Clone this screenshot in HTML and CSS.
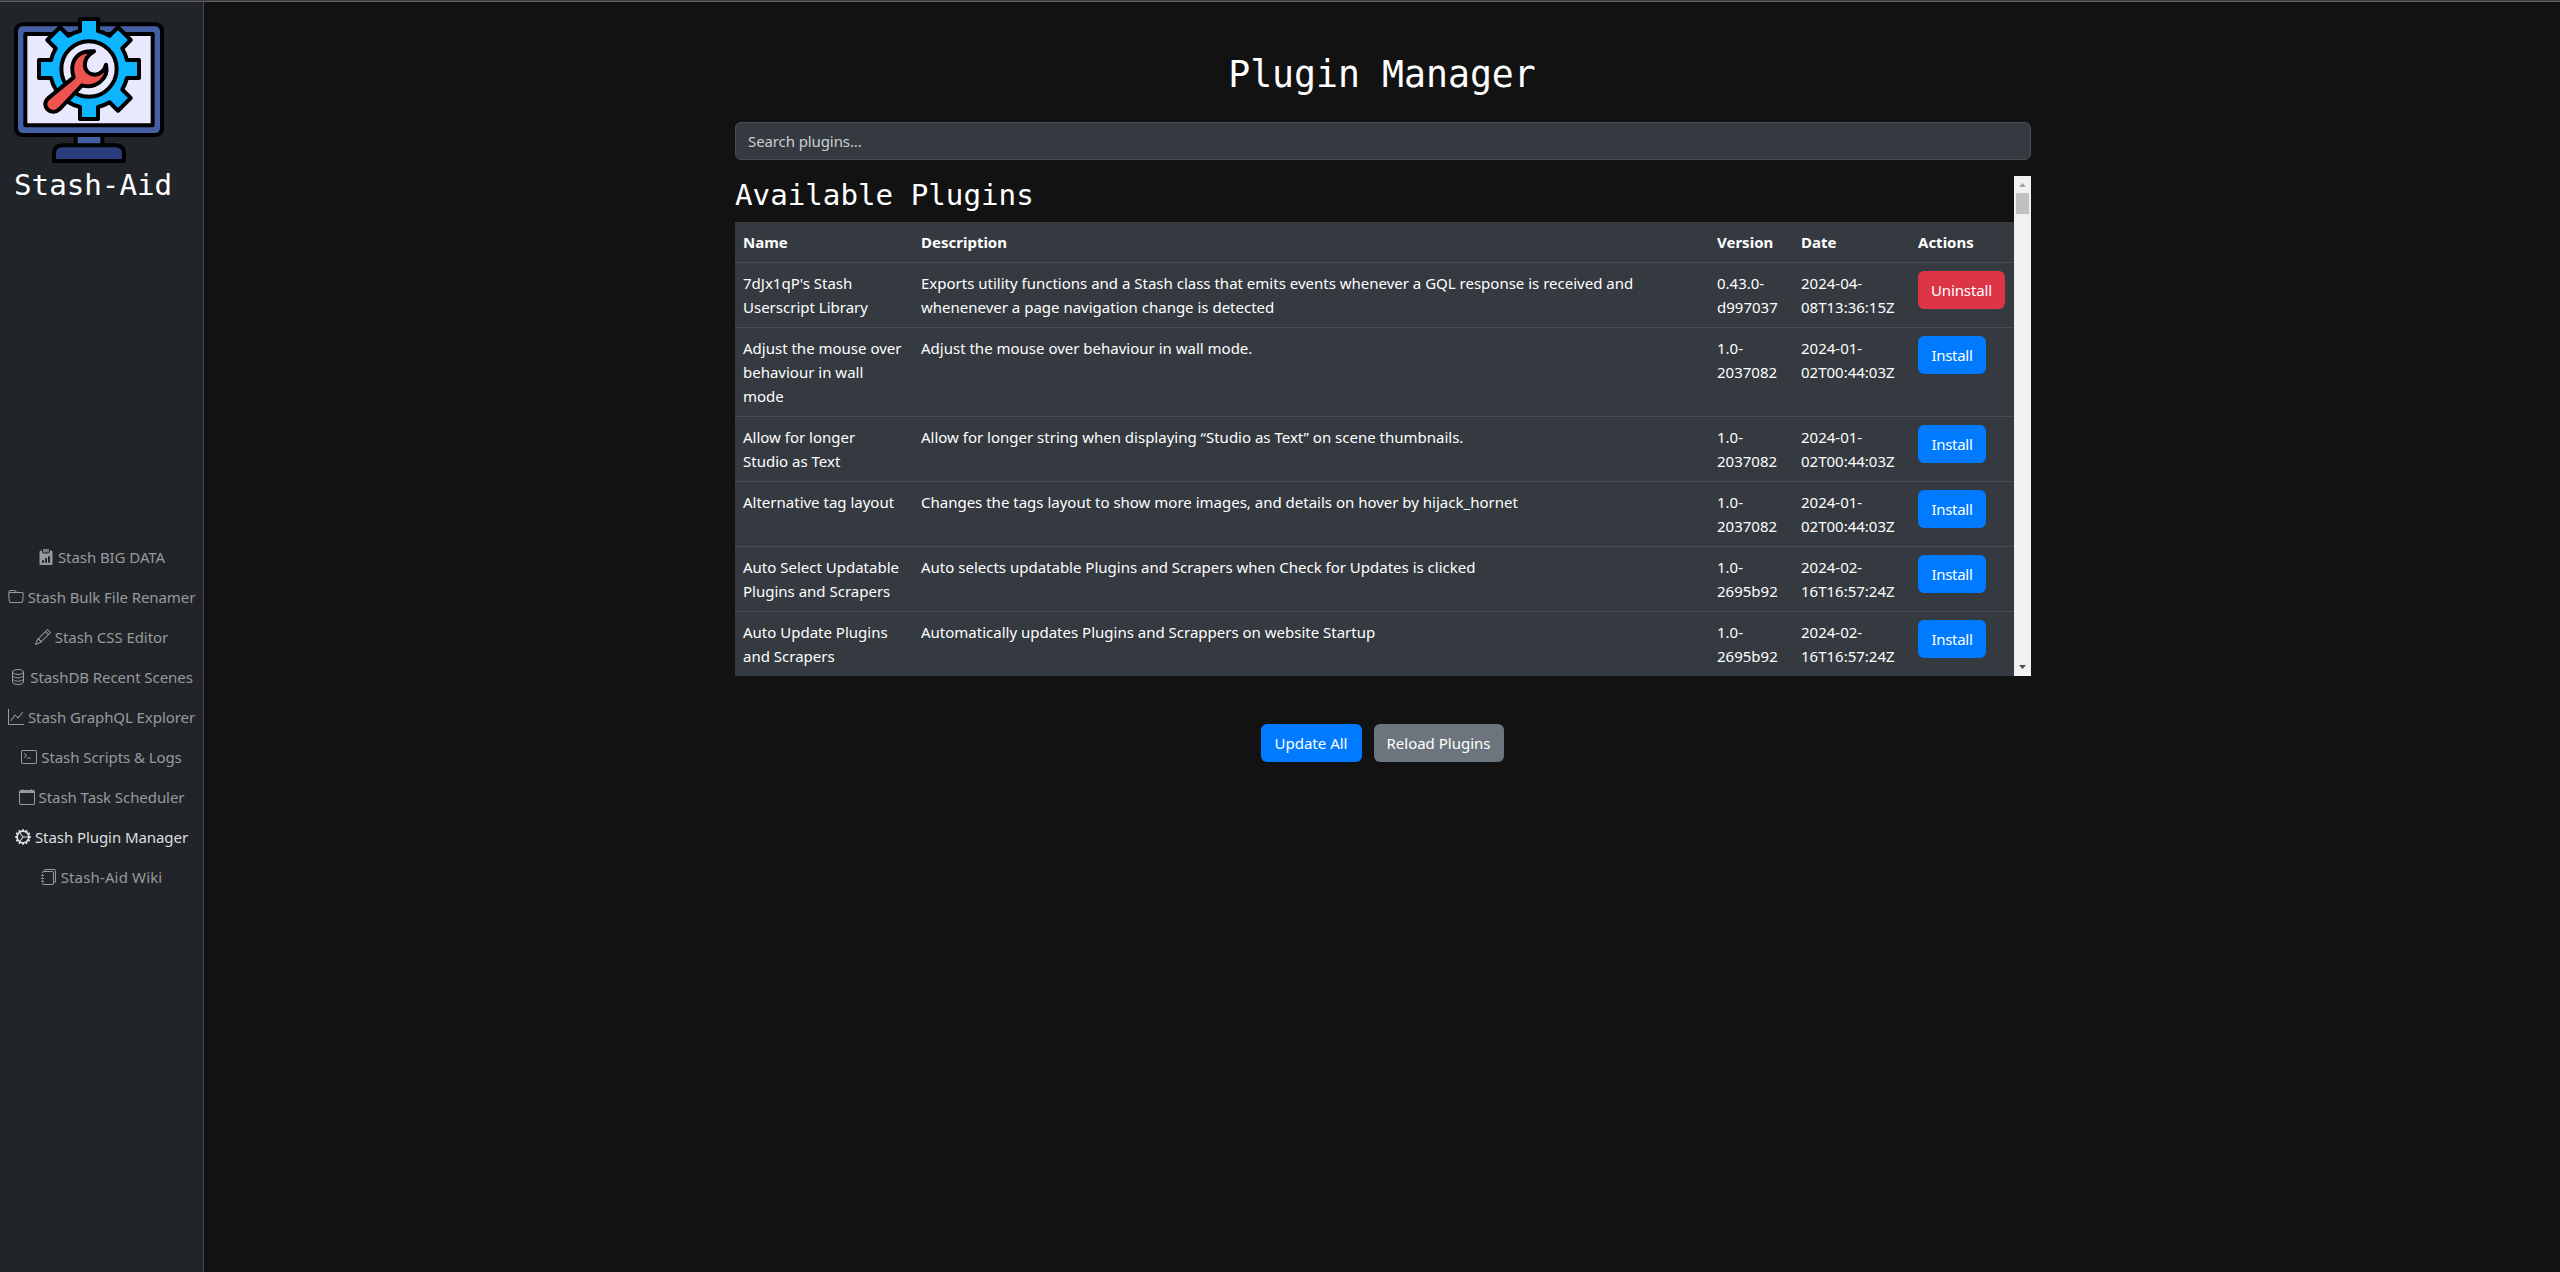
FILE: index.html
```
<!DOCTYPE html>
<html lang="en">
<head>
<meta charset="utf-8">
<title>Stash-Aid</title>
<link rel="stylesheet" href="styles.css">
</head>
<body>
<div class="layout">
  <aside class="sidebar">
    <div class="brand">
      <svg class="logo" viewBox="42 42 450 450" stroke="#000" stroke-width="12" stroke-linejoin="round">
        <rect x="227" y="400" width="80" height="40" fill="#455fa5"/>
        <path d="M162 483V461Q162 436 188 436H346Q372 436 372 461V483Z" fill="#293d7d"/>
        <rect x="48" y="73" width="438" height="332" rx="20" fill="#455fa5"/>
        <rect x="76" y="102" width="382" height="274" fill="#e8e8ff"/>
        <g transform="translate(267 207)">
          <path fill="#0db4ff" d="M-27-114V-150H27V-114A117 117 0 0 1 61.5-99.7L87-125.2 125.2-87 99.7-61.5A117 117 0 0 1 114-27H150V27H114A117 117 0 0 1 99.7 61.5L125.2 87 87 125.2 61.5 99.7A117 117 0 0 1 27 114V150H-27V114A117 117 0 0 1-61.5 99.7 117 117 0 0 1-99.7 61.5 117 117 0 0 1-114 27H-150V-27H-114A117 117 0 0 1-99.7-61.5L-125.2-87-87-125.2-61.5-99.7A117 117 0 0 1-27-114Z"/>
          <circle r="83" fill="#e8e8ff"/>
        </g>
        <path fill="#ef5350" d="M144 295 221 232C209 195 222 149 282 154C242 178 248 222 284 224C302 222 314 210 318 194C328 236 286 268 246 256L178 328C154 350 120 318 144 295Z"/>
      </svg>
      <div class="brand-name">Stash-Aid</div>
    </div>
    <nav class="nav">
      <a class="nav-link"><svg class="icon" viewBox="0 0 16 16"><path d="M5 0h6v3.500H5z" opacity=".75"/><path d="M4 1.500H3a1.500 1.500 0 0 0-1.500 1.500V15A1 1 0 0 0 2.500 16h11a1 1 0 0 0 1-1V3a1.500 1.500 0 0 0-1.500-1.500h-1v1A2 2 0 0 1 10 4.500H6A2 2 0 0 1 4 2.500zM10 8a1 1 0 1 1 2 0v5a1 1 0 1 1-2 0zm-6 4a1 1 0 1 1 2 0v1a1 1 0 1 1-2 0zm4-3a1 1 0 0 1 1 1v3a1 1 0 1 1-2 0v-3a1 1 0 0 1 1-1"/></svg>Stash BIG DATA</a>
      <a class="nav-link"><svg class="icon" viewBox="0 0 16 16"><path d="M.54 3.87.5 3a2 2 0 0 1 2-2h3.672a2 2 0 0 1 1.414.586l.828.828A2 2 0 0 0 9.828 3h3.982a2 2 0 0 1 1.992 2.181l-.637 7A2 2 0 0 1 13.174 14H2.826a2 2 0 0 1-1.991-1.819l-.637-7a2 2 0 0 1 .342-1.31zM2.19 4a1 1 0 0 0-.996 1.09l.637 7a1 1 0 0 0 .995.91h10.348a1 1 0 0 0 .995-.91l.637-7A1 1 0 0 0 13.81 4zm4.69-1.707A1 1 0 0 0 6.172 2H2.5a1 1 0 0 0-1 .981l.006.139q.323-.119.684-.12h5.396z"/></svg>Stash Bulk File Renamer</a>
      <a class="nav-link"><svg class="icon" viewBox="0 0 16 16"><path d="M12.146.146a.5.5 0 0 1 .708 0l3 3a.5.5 0 0 1 0 .708l-10 10a.5.5 0 0 1-.168.11l-5 2a.5.5 0 0 1-.65-.65l2-5a.5.5 0 0 1 .11-.168zM11.207 2.5 13.5 4.793 14.793 3.5 12.5 1.207zm1.586 3L10.5 3.207 4 9.707V10h.5a.5.5 0 0 1 .5.5v.5h.5a.5.5 0 0 1 .5.5v.5h.293zm-9.761 5.175-.106.106-1.528 3.821 3.821-1.528.106-.106A.5.5 0 0 1 5 12.5V12h-.5a.5.5 0 0 1-.5-.5V11h-.5a.5.5 0 0 1-.468-.325"/></svg>Stash CSS Editor</a>
      <a class="nav-link"><svg class="icon" viewBox="0 0 16 16"><g fill="none" stroke="currentColor"><ellipse cx="8" cy="3" rx="5.500" ry="2.500"/><path d="M2.500 3v10c0 1.400 2.500 2.500 5.500 2.500s5.500-1.100 5.500-2.500V3M2.500 6.300c0 1.400 2.500 2.500 5.500 2.500s5.500-1.100 5.500-2.500M2.500 9.700c0 1.400 2.500 2.500 5.500 2.500s5.500-1.100 5.500-2.500"/></g></svg>StashDB Recent Scenes</a>
      <a class="nav-link"><svg class="icon" viewBox="0 0 16 16"><path d="M0 0h1v15h15v1H0zm14.817 3.113a.5.5 0 0 1 .07.704l-4.500 5.500a.5.5 0 0 1-.74.037L7.060 6.767l-3.656 5.027a.5.5 0 0 1-.808-.588l4-5.500a.5.5 0 0 1 .758-.06l2.609 2.610 4.150-5.073a.5.5 0 0 1 .704-.07"/></svg>Stash GraphQL Explorer</a>
      <a class="nav-link"><svg class="icon" viewBox="0 0 16 16"><path d="M6 9a.5.5 0 0 1 .5-.5h3a.5.5 0 0 1 0 1h-3A.5.5 0 0 1 6 9M3.854 4.146a.5.5 0 1 0-.708.708L4.793 6.500 3.146 8.146a.5.5 0 1 0 .708.708l2-2a.5.5 0 0 0 0-.708z"/><path d="M2 1a2 2 0 0 0-2 2v10a2 2 0 0 0 2 2h12a2 2 0 0 0 2-2V3a2 2 0 0 0-2-2zm12 1a1 1 0 0 1 1 1v10a1 1 0 0 1-1 1H2a1 1 0 0 1-1-1V3a1 1 0 0 1 1-1z"/></svg>Stash Scripts &amp; Logs</a>
      <a class="nav-link"><svg class="icon" viewBox="0 0 16 16"><path d="M3.500 0a.5.5 0 0 1 .5.5V1h8V.5a.5.5 0 0 1 1 0V1h1a2 2 0 0 1 2 2v11a2 2 0 0 1-2 2H2a2 2 0 0 1-2-2V3a2 2 0 0 1 2-2h1V.5a.5.5 0 0 1 .5-.5M1 4v10a1 1 0 0 0 1 1h12a1 1 0 0 0 1-1V4z"/></svg>Stash Task Scheduler</a>
      <a class="nav-link active"><svg class="icon" viewBox="0 0 16 16"><path d="M7.068.727c.243-.97 1.620-.97 1.864 0l.071.286a.96.96 0 0 0 1.622.434l.205-.211c.695-.719 1.888-.03 1.613.931l-.08.284a.96.96 0 0 0 1.187 1.187l.283-.081c.96-.275 1.650.918.931 1.613l-.211.205a.96.96 0 0 0 .434 1.622l.286.071c.97.243.97 1.620 0 1.864l-.286.071a.96.96 0 0 0-.434 1.622l.211.205c.719.695.03 1.888-.931 1.613l-.284-.08a.96.96 0 0 0-1.187 1.187l.081.283c.275.96-.918 1.650-1.613.931l-.205-.211a.96.96 0 0 0-1.622.434l-.071.286c-.243.97-1.620.97-1.864 0l-.071-.286a.96.96 0 0 0-1.622-.434l-.205.211c-.695.719-1.888.03-1.613-.931l.08-.284a.96.96 0 0 0-1.186-1.187l-.284.081c-.96.275-1.650-.918-.931-1.613l.211-.205a.96.96 0 0 0-.434-1.622l-.286-.071c-.97-.243-.97-1.620 0-1.864l.286-.071a.96.96 0 0 0 .434-1.622l-.211-.205c-.719-.695-.03-1.888.931-1.613l.284.08a.96.96 0 0 0 1.187-1.186l-.081-.284c-.275-.96.918-1.650 1.613-.931l.205.211a.96.96 0 0 0 1.622-.434zM12.973 8.500H8.250l-2.834 3.779A4.998 4.998 0 0 0 12.973 8.500m0-1a4.998 4.998 0 0 0-7.557-3.779l2.834 3.780zM4.617 4.322A4.980 4.980 0 0 0 3.002 8c0 1.455.622 2.765 1.615 3.678L7.375 8z"/></svg>Stash Plugin Manager</a>
      <a class="nav-link wiki"><svg class="icon" viewBox="0 0 16 16"><path d="M5 0h8a2 2 0 0 1 2 2v10a2 2 0 0 1-2 2 2 2 0 0 1-2 2H3a2 2 0 0 1-2-2h1a1 1 0 0 0 1 1h8a1 1 0 0 0 1-1V4a1 1 0 0 0-1-1H3a1 1 0 0 0-1 1H1a2 2 0 0 1 2-2h8a2 2 0 0 1 2 2v9a1 1 0 0 0 1-1V2a1 1 0 0 0-1-1H5a1 1 0 0 0-1 1H3a2 2 0 0 1 2-2"/><path d="M1 6v-.5a.5.5 0 0 1 1 0V6h.5a.5.5 0 0 1 0 1h-2a.5.5 0 0 1 0-1zm0 3v-.5a.5.5 0 0 1 1 0V9h.5a.5.5 0 0 1 0 1h-2a.5.5 0 0 1 0-1zm0 2.500v.5H.5a.5.5 0 0 0 0 1h2a.5.5 0 0 0 0-1H2v-.5a.5.5 0 0 0-1 0"/></svg>Stash-Aid Wiki</a>
    </nav>
  </aside>
  <main class="main">
    <div class="container">
      <h1 class="title">Plugin Manager</h1>
      <input class="search" type="text" placeholder="Search plugins...">
      <div class="list">
        <div class="list-body">
          <h2 class="subtitle">Available Plugins</h2>
          <table class="plugins">
            <colgroup><col class="c-name"><col class="c-desc"><col class="c-version"><col class="c-date"><col class="c-actions"></colgroup>
            <thead>
              <tr><th>Name</th><th>Description</th><th>Version</th><th>Date</th><th>Actions</th></tr>
            </thead>
            <tbody>
              <tr><td>7dJx1qP's Stash<br>Userscript Library</td><td>Exports utility functions and a Stash class that emits events whenever a GQL response is received and<br>whenenever a page navigation change is detected</td><td>0.43.0-<br>d997037</td><td>2024-04-<br>08T13:36:15Z</td><td><button class="btn danger uninstall">Uninstall</button></td></tr>
              <tr><td>Adjust the mouse over<br>behaviour in wall<br>mode</td><td>Adjust the mouse over behaviour in wall mode.</td><td>1.0-<br>2037082</td><td>2024-01-<br>02T00:44:03Z</td><td><button class="btn primary install">Install</button></td></tr>
              <tr><td>Allow for longer<br>Studio as Text</td><td>Allow for longer string when displaying “Studio as Text” on scene thumbnails.</td><td>1.0-<br>2037082</td><td>2024-01-<br>02T00:44:03Z</td><td><button class="btn primary install">Install</button></td></tr>
              <tr><td>Alternative tag layout</td><td>Changes the tags layout to show more images, and details on hover by hijack_hornet</td><td>1.0-<br>2037082</td><td>2024-01-<br>02T00:44:03Z</td><td><button class="btn primary install">Install</button></td></tr>
              <tr><td>Auto Select Updatable<br>Plugins and Scrapers</td><td>Auto selects updatable Plugins and Scrapers when Check for Updates is clicked</td><td>1.0-<br>2695b92</td><td>2024-02-<br>16T16:57:24Z</td><td><button class="btn primary install">Install</button></td></tr>
              <tr><td>Auto Update Plugins<br>and Scrapers</td><td>Automatically updates Plugins and Scrappers on website Startup</td><td>1.0-<br>2695b92</td><td>2024-02-<br>16T16:57:24Z</td><td><button class="btn primary install">Install</button></td></tr>
            </tbody>
          </table>
        </div>
        <div class="scrollbar">
          <svg class="arrow" viewBox="0 0 17 17"><path d="M5 11h7L8.500 7z" fill="#a3a3a3"/></svg>
          <div class="thumb"></div>
          <svg class="arrow down" viewBox="0 0 17 17"><path d="M5 6h7L8.500 10z" fill="#505050"/></svg>
        </div>
      </div>
      <div class="buttons">
        <button class="btn primary update">Update All</button>
        <button class="btn secondary reload">Reload Plugins</button>
      </div>
    </div>
  </main>
</div>
</body>
</html>
```
FILE: styles.css
```
* { box-sizing: border-box; }

body {
  margin: 0;
  background: #121212;
  color: #fff;
  font: 15px/24px "Noto Sans", sans-serif;
}

body::before {
  content: "";
  display: block;
  height: 1px;
  background: #3b3b3d;
}

.layout {
  display: flex;
  height: 1271px;
  border-top: 1px solid #626264;
}

.sidebar {
  width: 204px;
  margin-right: 2px;
  background: #212529;
  border-right: 1px solid #4b4b4c;
  display: flex;
  flex-direction: column;
}

.brand { height: 535px; padding: 12px 0 0 14px; }
.logo { display: block; width: 150px; height: 150px; }

.brand-name {
  margin-top: 2px;
  font: 29.2px/38px "DejaVu Sans Mono", monospace;
}

.nav { display: flex; flex-direction: column; }

.nav-link {
  display: flex;
  justify-content: center;
  align-items: center;
  gap: 4px;
  height: 40px;
  color: #989a9b;
  letter-spacing: -0.07px;
  white-space: nowrap;
}

.nav-link.active { color: #dedfdf; }
.nav-link.wiki { letter-spacing: 0.15px; }
.icon { width: 16px; height: 16px; fill: currentColor; flex: none; }

.main { flex: 1; }
.container { width: 1296px; margin: 0 auto; padding-top: 49px; }

.title {
  margin: 0 0 23px;
  padding-right: 2px;
  font: 36.5px/48px "DejaVu Sans Mono", monospace;
  text-align: center;
}

.search {
  display: block;
  width: 100%;
  height: 38px;
  padding: 6px 12px;
  background: #343a40;
  border: 1px solid #454d55;
  border-radius: 6px;
  font: inherit;
  letter-spacing: -0.1px;
  color: #fff;
}

.search::placeholder { color: #cbced0; opacity: 1; }

.list { display: flex; height: 500px; margin-top: 16px; }
.list-body { width: 1279px; overflow: hidden; }

.subtitle {
  margin: 0;
  height: 46px;
  font: 29.2px/38px "DejaVu Sans Mono", monospace;
}

.plugins {
  width: 1279px;
  table-layout: fixed;
  border-collapse: separate;
  border-spacing: 0;
  background: #343a40;
}

.c-name { width: 178px; }
.c-desc { width: 796px; }
.c-version { width: 84px; }
.c-date { width: 117px; }
.c-actions { width: 104px; }

.plugins th,
.plugins td {
  padding: 8px;
  border-bottom: 1px solid #454d55;
  text-align: left;
  vertical-align: top;
  white-space: nowrap;
}

.plugins th { font-weight: 700; }
.plugins td { height: 65px; }

.btn {
  display: block;
  height: 38px;
  padding: 0;
  border: 0;
  border-radius: 6px;
  font: inherit;
  color: #fff;
}

.primary { background: #007bff; }
.danger { background: #dc3545; }
.secondary { background: #6c757d; }
.uninstall { width: 87px; letter-spacing: -0.1px; }
.install { width: 68px; letter-spacing: -0.3px; }
.update { width: 101px; }
.reload { width: 130px; }

.scrollbar {
  width: 17px;
  display: flex;
  flex-direction: column;
  align-items: center;
  background: #f1f1f1;
}

.arrow { width: 17px; height: 17px; }
.arrow.down { margin-top: auto; }
.thumb { width: 13px; height: 21px; background: #c1c1c1; }

.buttons {
  display: flex;
  justify-content: center;
  gap: 12px;
  margin-top: 48px;
  padding-right: 2px;
}
```
